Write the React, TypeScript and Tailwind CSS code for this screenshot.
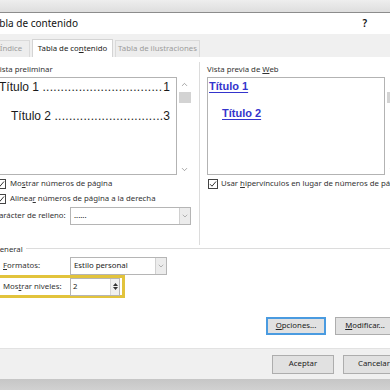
import { ChevronDown, ChevronUp } from "lucide-react";

const UI = "font-['Noto_Sans',sans-serif]";

function Check({ checked = true }: { checked?: boolean }) {
  return (
    <span className="flex h-[10px] w-[10px] shrink-0 items-center justify-center border border-[#444] bg-white">
      {checked && (
        <svg width="8" height="8" viewBox="0 0 8 8">
          <path d="M1 4.2 L3 6.2 L7 1.5" fill="none" stroke="#333" strokeWidth="1" />
        </svg>
      )}
    </span>
  );
}

function Select({ value, width }: { value: string; width: string }) {
  return (
    <div className={`flex h-[18px] items-stretch border border-[#b5b5b5] bg-white ${width}`}>
      <span className="flex flex-1 items-center pl-[3px] text-[7.8px] text-[#222]">{value}</span>
      <span className="flex w-[11px] items-center justify-center border-l border-[#d0d0d0] bg-[#ececec]">
        <ChevronDown size={8} strokeWidth={1.5} color="#777" />
      </span>
    </div>
  );
}

function Scrollbar({ thumb = true }: { thumb?: boolean }) {
  return (
    <div className="flex w-[15px] shrink-0 flex-col items-center bg-white">
      <ChevronUp size={9} strokeWidth={1.5} color="#666" className="mt-[3px]" />
      {thumb && <div className="mt-[3px] h-[11px] w-[12px] bg-[#d3d3d3]" />}
      <div className="flex-1" />
      <ChevronDown size={9} strokeWidth={1.5} color="#666" className="mb-[1px]" />
    </div>
  );
}

function Leader({ label, page, indent }: { label: string; page: string; indent: string }) {
  return (
    <div className={`flex items-baseline whitespace-nowrap font-['Liberation_Sans',sans-serif] text-[12px] leading-[16px] text-[#1a1a1a] ${indent}`}>
      <span>{label}&nbsp;</span>
      <span className="min-w-0 flex-1 overflow-hidden tracking-[0.3px]">{".".repeat(120)}</span>
      <span>{page}</span>
    </div>
  );
}

function Button({ u, rest, focused }: { u: string; rest: string; focused?: boolean }) {
  return (
    <div
      className={`flex h-[18px] w-[60px] shrink-0 items-center justify-center bg-[#e1e1e1] text-[7.8px] text-[#222] ${
        focused ? "border-2 border-[#4a9be0]" : "border border-[#adadad]"
      }`}
    >
      <span className="underline underline-offset-1">{u}</span>
      {rest}
    </div>
  );
}

export default function App() {
  return (
    <div className={`h-[390px] w-[390px] overflow-hidden bg-[#d8d8d8] ${UI}`}>
      <div className="-ml-[20px] flex w-[430px] flex-col">
        <div className="h-[12px] bg-gradient-to-b from-[#eeeeee] to-[#dedede]" />
        <div className="flex flex-col border-t border-[#8c8c8c] bg-white">
          {/* title bar */}
          <div className="flex h-[21px] items-center pl-[9px] pr-[10px] text-[10px] text-[#111]">
            <span>Tabla de contenido</span>
            <span className="ml-auto text-[10px] font-semibold">?</span>
            <span className="ml-[25px] text-[10px]">✕</span>
          </div>

          {/* tabs */}
          <div className="flex h-[23px] items-end bg-[#f0f0f0] pl-[12px] text-[7.8px]">
            <div className="flex h-[17px] w-[38px] items-center justify-center border border-b-0 border-[#dadada] bg-[#ededed] text-[#9c9c9c]">
              Índice
            </div>
            <div className="mx-[2px] flex h-[18px] w-[81px] items-center justify-center border border-b-0 border-[#d4d4d4] bg-white text-[#222]">
              Tabla de co<span className="underline underline-offset-1">n</span>tenido
            </div>
            <div className="flex h-[17px] w-[85px] items-center justify-center border border-b-0 border-[#dadada] bg-[#ededed] text-[#9c9c9c]">
              Tabla de ilustraciones
            </div>
          </div>

          {/* content */}
          <div className="flex h-[291px] flex-col bg-white text-[7.8px] text-[#333]">
            <div className="flex pl-[13px]">
              {/* left column */}
              <div className="flex w-[200px] flex-col">
                <div className="ml-[2px] mt-[7px] h-[11px] leading-[11px]">Vista preliminar</div>
                <div className="mt-[2px] flex h-[98px]">
                  <div className="flex w-[184px] flex-col border border-[#b3b3b3] pl-[5px] pr-[6px] pt-[1px]">
                    <Leader label="Título 1" page="1" indent="" />
                    <div className="h-[13px]" />
                    <Leader label="Título 2" page="3" indent="pl-[12px]" />
                  </div>
                  <Scrollbar />
                </div>
                <div className="ml-[3px] mt-[3px] flex h-[12px] items-center gap-[4px]">
                  <Check />
                  <span>
                    Mo<span className="underline underline-offset-1">s</span>trar números de página
                  </span>
                </div>
                <div className="ml-[3px] mt-[3px] flex h-[12px] items-center gap-[4px]">
                  <Check />
                  <span>
                    Alinea<span className="underline underline-offset-1">r</span> números de página a la derecha
                  </span>
                </div>
                <div className="mt-[2px] flex h-[18px] items-center">
                  <span className="ml-[1px] w-[76px]">Carácter de relleno:</span>
                  <Select value="......" width="w-[121px]" />
                </div>
              </div>

              {/* right column */}
              <div className="ml-[6px] mt-[5px] flex h-[183px] flex-1 flex-col border-l border-[#dcdcdc] pl-[7px]">
                <div className="mt-[2px] h-[11px] leading-[11px]">
                  Vista previa de <span className="underline underline-offset-1">W</span>eb
                </div>
                <div className="mt-[2px] flex h-[98px]">
                  <div className="flex w-[178px] flex-col border border-[#b3b3b3] pl-[1px] pt-[1px] font-['Liberation_Sans',sans-serif] text-[11px] font-bold leading-[14px] text-[#3434cc]">
                    <span className="underline underline-offset-2">Título 1</span>
                    <span className="mt-[13px] pl-[13px] underline underline-offset-2">Título 2</span>
                  </div>
                  <Scrollbar />
                </div>
                <div className="ml-[1px] mt-[3px] flex h-[12px] items-center gap-[3px] whitespace-nowrap">
                  <Check />
                  <span>
                    Usar <span className="underline underline-offset-1">h</span>ipervínculos en lugar de números de página
                  </span>
                </div>
              </div>
            </div>

            {/* general group */}
            <div className="flex h-[8px] items-center pl-[14px]">
              <span className="leading-[8px]">General</span>
              <div className="ml-[3px] h-px flex-1 -translate-y-[1px] bg-[#dcdcdc]" />
            </div>
            <div className="mt-[4px] flex h-[18px] items-center pl-[23px]">
              <span className="w-[67px]">
                <span className="underline underline-offset-1">F</span>ormatos:
              </span>
              <Select value="Estilo personal" width="w-[97px]" />
            </div>
            <div className="ml-[10px] flex h-[23px] w-[135px] items-center border-[3px] border-[#e2c33c] pl-[10px]">
              <span className="w-[67px]">
                Mos<span className="underline underline-offset-1">t</span>rar niveles:
              </span>
              <div className="flex h-[18px] w-[50px] items-stretch border border-[#b5b5b5] bg-white">
                <span className="flex flex-1 items-center pl-[2px] text-[#222]">2</span>
                <span className="flex w-[9px] flex-col items-center justify-center gap-[1px] border-l border-[#d8d8d8] bg-[#f0f0f0]">
                  <svg width="5" height="3" viewBox="0 0 5 3">
                    <path d="M0 3 L2.5 0 L5 3 Z" fill="#333" />
                  </svg>
                  <svg width="5" height="3" viewBox="0 0 5 3">
                    <path d="M0 0 L2.5 3 L5 0 Z" fill="#333" />
                  </svg>
                </span>
              </div>
            </div>
            <div className="mt-[19px] flex gap-[9px] pl-[286px]">
              <Button u="O" rest="pciones..." focused />
              <Button u="M" rest="odificar..." />
            </div>
          </div>

          {/* footer */}
          <div className="flex h-[31px] items-center gap-[9px] border-t border-[#e2e2e2] bg-[#f0f0f0] pl-[292px]">
            <div className="flex h-[19px] w-[62px] items-center justify-center border border-[#adadad] bg-[#e1e1e1] text-[7.8px] text-[#222]">
              Aceptar
            </div>
            <div className="flex h-[19px] w-[62px] items-center justify-center border border-[#adadad] bg-[#e1e1e1] text-[7.8px] text-[#222]">
              Cancelar
            </div>
          </div>
        </div>
        <div className="h-[20px] bg-gradient-to-b from-[#c6c6c6] to-[#dadada]" />
      </div>
    </div>
  );
}
